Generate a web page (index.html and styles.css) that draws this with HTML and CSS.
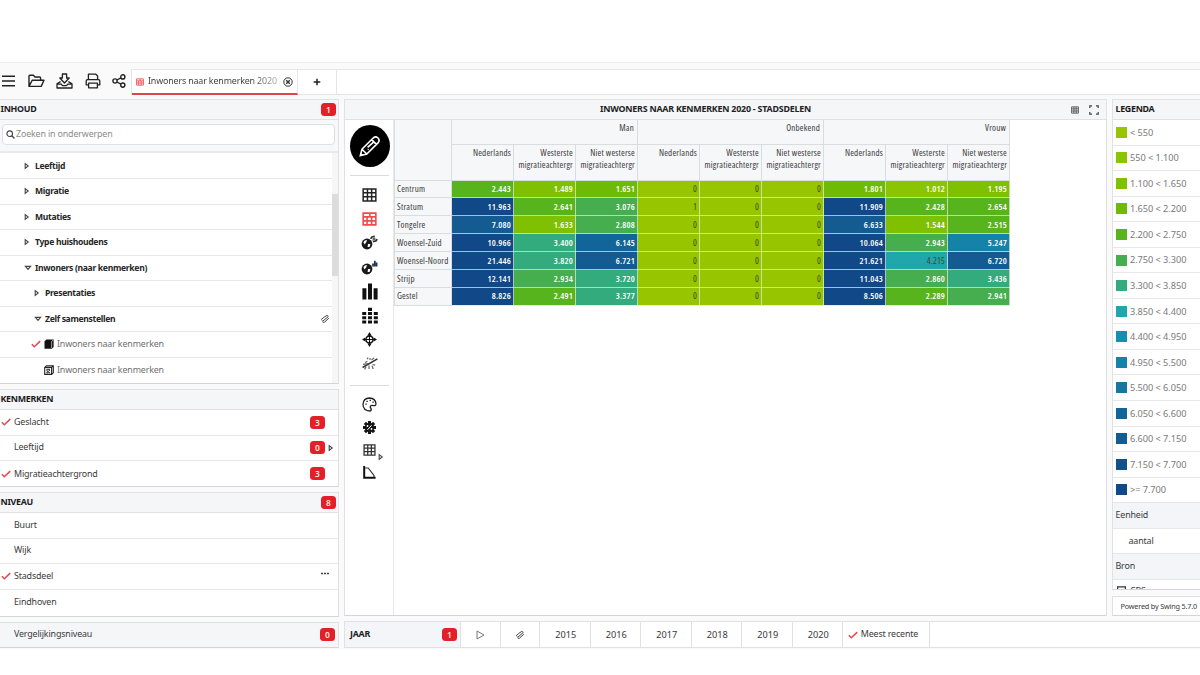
FILE: index.html
```html
<!DOCTYPE html>
<html lang="nl">
<head>
<meta charset="utf-8">
<title>Inwoners naar kenmerken 2020</title>
<link rel="stylesheet" href="styles.css">
</head>
<body>
<svg class="defs" aria-hidden="true">
  <symbol id="check" viewBox="0 0 10 8"><path d="M.8 4.3 3.3 6.7 9.2 1.1" fill="none" stroke="#e8474c" stroke-width="1.5"/></symbol>
  <symbol id="right" viewBox="0 0 6 8"><path d="M1.2 1.6V6.4L4.2 4Z" fill="none" stroke="#444" stroke-width="1.1"/></symbol>
  <symbol id="down" viewBox="0 0 8 6"><path d="M1.4 1.4H6.6L4 4.4Z" fill="none" stroke="#444" stroke-width="1.1"/></symbol>
  <symbol id="multi" viewBox="0 0 10 10"><path d="M1.2 5.6 3.8 3.4 6.8 1.4M1.6 6.2 2.8 7.2 8.2 2.6M2.8 8.2 4.2 8.4 8.8 4.2M6.8 1.4 8.4 2.4" fill="none" stroke="#444" stroke-width="1"/></symbol>
  <symbol id="grid" viewBox="0 0 16 15"><path d="M1.2 1.2H14.8V13.8H1.2ZM1.2 5.2H14.8M1.2 9.5H14.8M5.8 1.2V13.8M10.3 1.2V13.8" fill="none" stroke="currentColor" stroke-width="1.6"/></symbol>
  <symbol id="pivot" viewBox="0 0 16 15"><path d="M1.2 1.2H14.8V13.8H1.2ZM1.2 5.2H14.8M1.2 9.5H14.8M5.4 5.2V13.8M8.4 1.2V5.2M10.3 5.2V13.8" fill="none" stroke="currentColor" stroke-width="1.7"/></symbol>
</svg>
<div class="app">
  <header class="topbar">
    <nav class="tools">
      <svg width="14" height="14" viewBox="0 0 14 14"><path d="M0 2.2H13M0 7H13M0 11.8H13" stroke="#222" stroke-width="1.6"/></svg>
      <svg width="17" height="14" viewBox="0 0 17 14"><path d="M1 12V2.2Q1 1.2 2 1.2H5.4L7 3H11.6Q12.6 3 12.6 4V6M1 12.4 4.2 6.2H16L13.2 12.4Z" fill="none" stroke="#222" stroke-width="1.4" stroke-linejoin="round"/></svg>
      <svg width="17" height="16" viewBox="0 0 17 16"><path d="M6.4 1H10.6V5H13.2L8.5 10 3.8 5H6.4ZM4.6 8.6 1 10.8V15H16V10.8L12.4 8.6M1 11.2H5.2L6.6 12.6H10.4L11.8 11.2H16" fill="none" stroke="#222" stroke-width="1.3" stroke-linejoin="round"/></svg>
      <svg width="16" height="16" viewBox="0 0 16 16"><path d="M3.4 6.5V1.2H10.8L12.6 3V6.5M3.4 11.8H1.2V8Q1.2 6.6 2.6 6.6H13.4Q14.8 6.6 14.8 8V11.8H12.6M3.6 10.2H12.4V14.8H3.6Z" fill="none" stroke="#222" stroke-width="1.3" stroke-linejoin="round"/></svg>
      <svg width="14" height="14" viewBox="0 0 14 14"><g fill="none" stroke="#222" stroke-width="1.4"><circle cx="3" cy="7" r="2.1"/><circle cx="10.8" cy="2.9" r="2.1"/><circle cx="10.8" cy="11.1" r="2.1"/><path d="M4.9 6 8.9 3.9M4.9 8 8.9 10.1"/></g></svg>
    </nav>
    <div class="tabs">
      <div class="tab active"><svg class="red" width="8" height="8"><use href="#pivot"/></svg><span class="tabname">Inwoners naar kenmerken 2020</span>
        <svg class="close" width="10" height="10" viewBox="0 0 10 10"><circle cx="5" cy="5" r="4.2" fill="none" stroke="#333"/><path d="M3.2 3.2 6.8 6.8M6.8 3.2 3.2 6.8" stroke="#333" stroke-width="1.4"/></svg></div>
      <div class="tab plus"><svg width="8" height="8" viewBox="0 0 8 8"><path d="M4 .7V7.3M.7 4H7.3" stroke="#222" stroke-width="1.5"/></svg></div>
    </div>
  </header>

  <main class="work">
    <aside class="left">
      <section class="panel inhoud">
        <h2 class="bar"><span>INHOUD</span><b class="badge">1</b></h2>
        <div class="searchwrap"><div class="search"><svg width="9" height="9" viewBox="0 0 9 9"><circle cx="3.7" cy="3.7" r="2.8" fill="none" stroke="#444" stroke-width="1.1"/><path d="M5.8 5.8 8.5 8.5" stroke="#444" stroke-width="1.3"/></svg><span>Zoeken in onderwerpen</span></div></div>
        <div class="treewrap">
          <div class="tree">
            <div class="row n1"><svg class="ar"><use href="#right"/></svg>Leeftijd</div>
            <div class="row n1"><svg class="ar"><use href="#right"/></svg>Migratie</div>
            <div class="row n1"><svg class="ar"><use href="#right"/></svg>Mutaties</div>
            <div class="row n1"><svg class="ar"><use href="#right"/></svg>Type huishoudens</div>
            <div class="row n1"><svg class="ad"><use href="#down"/></svg>Inwoners (naar kenmerken)</div>
            <div class="row n2"><svg class="ar"><use href="#right"/></svg>Presentaties</div>
            <div class="row n2"><svg class="ad"><use href="#down"/></svg>Zelf samenstellen<svg class="multi"><use href="#multi"/></svg></div>
            <div class="row n3"><svg class="ck"><use href="#check"/></svg><svg class="cube" viewBox="0 0 10 10"><path d="M.5 2.2 2.5.4H9.6V8L7.8 9.7H.5Z" fill="#111"/><path d="M7.6 9V2.4L9.3.9" fill="none" stroke="#fff" stroke-width=".6"/></svg>Inwoners naar kenmerken</div>
            <div class="row n3"><i class="ck"></i><svg class="cube" viewBox="0 0 10 10"><path d="M.7 2.4 2.5.7H9.3V7.8L7.6 9.4H.7ZM.7 2.4H7.6V9.4M7.6 2.4 9.3.7M2.3 4.3H5.3V6M2.6 5.4 5.8 8.2M2.3 7.8H4" fill="none" stroke="#222" stroke-width="1.1"/></svg>Inwoners naar kenmerken</div>
          </div>
          <div class="scroll"><i></i></div>
        </div>
      </section>
      <section class="panel kenm">
        <h2 class="bar"><span>KENMERKEN</span></h2>
        <div class="row item"><svg class="ck"><use href="#check"/></svg><span>Geslacht</span><b class="badge">3</b><i class="ar"></i></div>
        <div class="row item"><i class="ck"></i><span>Leeftijd</span><b class="badge">0</b><svg class="ar"><use href="#right"/></svg></div>
        <div class="row item"><svg class="ck"><use href="#check"/></svg><span>Migratieachtergrond</span><b class="badge">3</b><i class="ar"></i></div>
      </section>
      <section class="panel niv">
        <h2 class="bar"><span>NIVEAU</span><b class="badge">8</b></h2>
        <div class="row item"><i class="ck"></i><span>Buurt</span></div>
        <div class="row item"><i class="ck"></i><span>Wijk</span></div>
        <div class="row item"><svg class="ck"><use href="#check"/></svg><span>Stadsdeel</span><svg class="dots" width="10" height="3" viewBox="0 0 10 3"><path d="M1 1.5H3M4 1.5H6M7 1.5H9" stroke="#444" stroke-width="1.5"/></svg></div>
        <div class="row item"><i class="ck"></i><span>Eindhoven</span></div>
      </section>
      <section class="panel verg"><span>Vergelijkingsniveau</span><b class="badge">0</b></section>
    </aside>

    <div class="right">
      <div class="upper">
        <section class="panel center">
          <h2 class="bar title"><span>INWONERS NAAR KENMERKEN 2020 - STADSDELEN</span>
            <svg class="tg" width="8" height="8"><use href="#grid"/></svg>
            <svg class="fs" width="10" height="10" viewBox="0 0 10 10"><path d="M.8 3V.8H3M7 .8H9.2V3M9.2 7V9.2H7M3 9.2H.8V7" fill="none" stroke="#444" stroke-width="1.2"/></svg></h2>
          <div class="body">
            <div class="palette">
              <div class="pencil"><svg width="22" height="22" viewBox="0 0 22 22"><path d="M1.3 20.7 3 14.2 14.4 2.8Q16.6.8 19 3 21.2 5.4 19.2 7.6L7.8 19ZM3 14.2 7.8 19M12.6 4.6 17.4 9.4M8.6 12.4 14.8 6.8M8.8 14.6 9.5 14M1.8 18.5 3.5 20.2" fill="none" stroke="#fff" stroke-width="1.6"/></svg></div>
              <div class="icons one">
                <svg width="15" height="14" class="dark"><use href="#grid"/></svg>
                <svg width="15" height="14" class="red"><use href="#pivot"/></svg>
                <svg width="17" height="15" viewBox="0 0 17 15"><circle cx="6" cy="9" r="5.4" fill="#1a1a1a"/><path d="M2.4 7.2Q3.4 5 6 5L5.4 7 3.6 9.6ZM7 9H9.4L8.6 12H6.6Z" fill="#fff"/><path d="M10 4Q10 1.5 13 1.6L12.6.6M16 4Q15.5 6.6 12.6 6.2L13 7.2M11.6 4H14.4" fill="none" stroke="#333" stroke-width="1.6"/></svg>
                <svg width="17" height="15" viewBox="0 0 17 15"><circle cx="6" cy="9" r="5.4" fill="#1a1a1a"/><path d="M2.4 7.2Q3.4 5 6 5L5.4 7 3.6 9.6ZM7 9H9.4L8.6 12H6.6Z" fill="#fff"/><path d="M12 6.5V3.5M13.8 6.5V.8M15.6 6.5V2.5" stroke="#26304e" stroke-width="1.7"/></svg>
                <svg width="16" height="17" viewBox="0 0 16 17"><path d="M2.4 16.5V5.2M8 16.5V.5M13.6 16.5V5.2" stroke="#111" stroke-width="4"/></svg>
                <svg width="16" height="17" viewBox="0 0 16 17"><path d="M2.2 16.5V5M8 16.5V.3M13.8 16.5V5" stroke="#111" stroke-width="4" stroke-dasharray="3.1 1.1"/></svg>
                <svg width="15" height="15" viewBox="0 0 15 15"><path d="M7.5 0 9.4 3.2H5.6ZM7.5 15 5.6 11.8H9.4ZM0 7.5 3.2 5.6V9.4ZM15 7.5 11.8 9.4V5.6Z" fill="#111"/><circle cx="7.5" cy="7.5" r="3.6" fill="none" stroke="#111" stroke-width="1.6"/><path d="M7.5 1V14M1 7.5H14" stroke="#111" stroke-width="1.1"/></svg>
                <svg width="16" height="15" viewBox="0 0 16 15"><path d="M.6 11.5 15.4 2.8" stroke="#333" stroke-width="1.5"/><path d="M1 8.4 6 7.6M5 3.2 6.2 1.6M8 4V2M3 6.5 5.4 5.3M10.5 8.5 13.2 9.2M7 9.5V13M10 9.8 11.2 13M4 10.8 2.6 13.4M9.5 4 12 2" stroke="#666" stroke-width="1.2"/></svg>
              </div>
              <div class="icons two">
                <svg width="15" height="15" viewBox="0 0 15 15"><path d="M8 14Q1.2 13.6 1 7.4 1.4 1.2 7.4 1 13.6 1.2 14 6.8 13.8 9 11.4 8.6 8.4 8 8.2 10 9.6 11.8 9 13.4 8.7 14 8 14Z" fill="none" stroke="#222" stroke-width="1.3"/><path d="M3.3 7.2H4.7M4.4 4.3H5.8M7.6 3.3H9M10.4 5.2H11.8" stroke="#222" stroke-width="1.3"/></svg>
                <svg width="13" height="13" viewBox="0 0 13 13"><path d="M6.5 0V13M0 6.5H13M1.9 1.9 11.1 11.1M11.1 1.9 1.9 11.1" stroke="#151515" stroke-width="3.1"/><circle cx="6.5" cy="6.5" r="4.6" fill="#151515"/><path d="M4.5 8.8 8.6 4.2" stroke="#fff" stroke-width="1"/><circle cx="4.5" cy="5" r=".9" fill="#fff"/><circle cx="8.5" cy="8" r=".9" fill="#fff"/></svg>
                <div class="gridmore"><svg width="13" height="12"><use href="#grid"/></svg><svg class="ar sub"><use href="#right"/></svg></div>
                <svg width="13" height="13" viewBox="0 0 13 13"><path d="M1.2 0V11.8H12.6" fill="none" stroke="#111" stroke-width="2"/><path d="M2.2 2H5.2L11 9.4V11" fill="none" stroke="#333" stroke-width="1.2"/></svg>
              </div>
            </div>
            <table class="data">
              <colgroup><col class="first"><col><col><col><col><col><col><col><col><col></colgroup>
              <tr class="h1"><th rowspan="2"></th><th colspan="3">Man</th><th colspan="3">Onbekend</th><th colspan="3">Vrouw</th></tr>
              <tr class="h2"><th>Nederlands</th><th>Westerste<br>migratieachtergr</th><th>Niet westerse<br>migratieachtergr</th><th>Nederlands</th><th>Westerste<br>migratieachtergr</th><th>Niet westerse<br>migratieachtergr</th><th>Nederlands</th><th>Westerste<br>migratieachtergr</th><th>Niet westerse<br>migratieachtergr</th></tr>
              <tr><th>Centrum</th><td class="c4">2.443</td><td class="c2">1.489</td><td class="c3">1.651</td><td class="c0">0</td><td class="c0">0</td><td class="c0">0</td><td class="c3">1.801</td><td class="c1">1.012</td><td class="c2">1.195</td></tr>
              <tr><th>Stratum</th><td class="c14">11.963</td><td class="c4">2.641</td><td class="c5">3.076</td><td class="c0">1</td><td class="c0">0</td><td class="c0">0</td><td class="c14">11.909</td><td class="c4">2.428</td><td class="c4">2.654</td></tr>
              <tr><th>Tongelre</th><td class="c12">7.080</td><td class="c2">1.633</td><td class="c5">2.808</td><td class="c0">0</td><td class="c0">0</td><td class="c0">0</td><td class="c12">6.633</td><td class="c2">1.544</td><td class="c4">2.515</td></tr>
              <tr><th>Woensel-Zuid</th><td class="c14">10.966</td><td class="c6">3.400</td><td class="c11">6.145</td><td class="c0">0</td><td class="c0">0</td><td class="c0">0</td><td class="c14">10.064</td><td class="c5">2.943</td><td class="c9">5.247</td></tr>
              <tr><th>Woensel-Noord</th><td class="c14">21.446</td><td class="c6">3.820</td><td class="c12">6.721</td><td class="c0">0</td><td class="c0">0</td><td class="c0">0</td><td class="c14">21.621</td><td class="c7 ink">4.215</td><td class="c12">6.720</td></tr>
              <tr><th>Strijp</th><td class="c14">12.141</td><td class="c5">2.934</td><td class="c6">3.720</td><td class="c0">0</td><td class="c0">0</td><td class="c0">0</td><td class="c14">11.043</td><td class="c5">2.860</td><td class="c6">3.436</td></tr>
              <tr><th>Gestel</th><td class="c14">8.826</td><td class="c4">2.491</td><td class="c6">3.377</td><td class="c0">0</td><td class="c0">0</td><td class="c0">0</td><td class="c14">8.506</td><td class="c4">2.289</td><td class="c5">2.941</td></tr>
            </table>
          </div>
        </section>
        <aside class="legendcol">
          <section class="panel legend">
            <h2 class="bar"><span>LEGENDA</span></h2>
            <div class="row lg"><i class="c0"></i>&lt; 550</div>
            <div class="row lg"><i class="c1"></i>550 &lt; 1.100</div>
            <div class="row lg"><i class="c2"></i>1.100 &lt; 1.650</div>
            <div class="row lg"><i class="c3"></i>1.650 &lt; 2.200</div>
            <div class="row lg"><i class="c4"></i>2.200 &lt; 2.750</div>
            <div class="row lg"><i class="c5"></i>2.750 &lt; 3.300</div>
            <div class="row lg"><i class="c6"></i>3.300 &lt; 3.850</div>
            <div class="row lg"><i class="c7"></i>3.850 &lt; 4.400</div>
            <div class="row lg"><i class="c8"></i>4.400 &lt; 4.950</div>
            <div class="row lg"><i class="c9"></i>4.950 &lt; 5.500</div>
            <div class="row lg"><i class="c10"></i>5.500 &lt; 6.050</div>
            <div class="row lg"><i class="c11"></i>6.050 &lt; 6.600</div>
            <div class="row lg"><i class="c12"></i>6.600 &lt; 7.150</div>
            <div class="row lg"><i class="c13"></i>7.150 &lt; 7.700</div>
            <div class="row lg"><i class="c14"></i>&gt;= 7.700</div>
            <div class="row sec">Eenheid</div>
            <div class="row val">aantal</div>
            <div class="row sec">Bron</div>
            <div class="row src"><svg width="9" height="9" viewBox="0 0 9 9"><path d="M.6 8V.8H8.4V8Z" fill="none" stroke="#333" stroke-width="1.2"/></svg>CBS</div>
          </section>
          <section class="panel powered">Powered by Swing 5.7.0</section>
        </aside>
      </div>
      <footer class="years">
        <div class="jaar"><span>JAAR</span><b class="badge">1</b></div>
        <div class="ic play"><svg width="9" height="10" viewBox="0 0 9 10"><path d="M1 1V9L8 5Z" fill="none" stroke="#777" stroke-width="1"/></svg></div>
        <div class="ic"><svg class="multi"><use href="#multi"/></svg></div>
        <div class="yr">2015</div><div class="yr">2016</div><div class="yr">2017</div><div class="yr">2018</div><div class="yr">2019</div><div class="yr">2020</div>
        <div class="recent"><svg class="ck"><use href="#check"/></svg>Meest recente</div>
      </footer>
    </div>
  </main>
</div>
</body>
</html>
```

FILE: styles.css
```css
* { box-sizing: border-box; }
body { margin: 0; width: 1200px; height: 675px; padding-top: 62px; overflow: hidden; background: #fff; color: #3a3a3a; font: 8.9px/1.2 "Noto Sans", "Open Sans", sans-serif; letter-spacing: -.15px; }
.defs { position: absolute; width: 0; height: 0; }
svg { flex: none; display: block; }
.app { height: 587px; background: #fafafa; border-top: 1px solid #ededed; display: flex; flex-direction: column; }

.topbar { height: 32px; display: flex; padding-top: 6px; }
.tools { width: 131px; display: flex; align-items: center; gap: 11.5px; padding: 0 0 2px 2px; }
.tabs { flex: 1; display: flex; background: #fff; border: 1px solid #e6e6e6; border-right: 0; height: 26px; }
.tab { display: flex; align-items: center; height: 25px; }
.tab.active { width: 166px; padding-left: 4px; border-right: 1px solid #e6e6e6; border-bottom: 2px solid #d9474a; }
.tabname { width: 132px; margin-left: 4px; white-space: nowrap; background: linear-gradient(90deg, #3a3a3a 78%, #bbb); background-clip: text; -webkit-background-clip: text; color: transparent; }
.close { margin-left: 3px; }
.plus { width: 39px; justify-content: center; border-right: 1px solid #e6e6e6; padding-bottom: 2px; }
.red { color: #f04a4f; }
.dark { color: #222; }

.work { flex: 1; display: flex; gap: 5px; padding-top: 4px; min-height: 0; }
.left { width: 339px; display: flex; flex-direction: column; }
.panel { background: #fff; border: 1px solid #dfe1e4; border-bottom-color: #d2d4da; }
.left .panel { border-left: 0; }
.bar { margin: 0; height: 20px; display: flex; align-items: center; background: #f5f6f8; border-bottom: 1px solid #dfe1e4; font-size: 8.9px; font-weight: 700; color: #1d1d1d; letter-spacing: -.3px; }
.left .bar { padding-left: .5px; }
.badge { width: 15px; height: 13px; margin-left: auto; border-radius: 3.5px; background: #e3202a; color: #ffe9d8; font-size: 8.4px; line-height: 13px; font-weight: 600; text-align: center; letter-spacing: 0; }
.bar .badge { margin-right: 2px; }
.row { height: 25.55px; display: flex; align-items: center; border-bottom: 1px solid #e6e7e9; white-space: nowrap; }
.ar { width: 6px; height: 8px; flex: none; }
.ad { width: 8px; height: 6px; }
.ck { width: 10px; height: 8px; flex: none; }
.multi { width: 10px; height: 10px; }

.inhoud { height: 285px; display: flex; flex-direction: column; }
.inhoud .bar, .searchwrap { flex: none; }
.searchwrap { height: 33px; background: #f7f8fa; padding: 4px 3px 0 2px; border-bottom: 2px solid #e7e9ee; }
.search { height: 21px; display: flex; align-items: center; gap: 1px; border: 1px solid #dcdfe3; border-radius: 4px; background: #fff; color: #8b8b8b; padding-left: 3px; }
.treewrap { flex: 1; display: flex; min-height: 0; }
.tree { flex: 1; overflow: hidden; padding-top: .6px; }
.tree .row { height: 25.5px; }
.scroll { width: 6px; background: #f6f6f6; }
.scroll i { display: block; height: 82px; margin-top: 41px; background: #dcdcdc; }
.n1, .n2 { font-weight: 700; font-size: 8.6px; letter-spacing: -.32px; color: #262626; }
.n1 { padding-left: 24px; }
.n1 .ar, .n2 .ar { margin-right: 5px; }
.n1 .ad, .n2 .ad { margin-right: 3px; }
.n2 { padding-left: 34px; }
.n2 .multi { margin: 0 2px 0 auto; }
.n3 { padding-left: 31px; color: #6f6f6f; }
.tree .row:last-child { border-bottom: 0; }
.cube { width: 10px; height: 10px; margin: 0 3px; }

.kenm { height: 98px; margin-top: 5px; }
.niv { height: 125px; margin-top: 5px; }
.item { padding-left: 1px; }
.item span { margin-left: 3px; }
.kenm .badge { margin-right: 3px; }
.kenm .ar { margin-right: 4px; }
.kenm .row:last-child, .niv .row:last-child { border-bottom: 0; }
.dots { margin: -6px 8px 0 auto; }
.verg { height: 26px; margin-top: 5px; display: flex; align-items: center; background: #f4f6f8; padding: 0 3px 1px 14px; }

.right { flex: 1; display: flex; flex-direction: column; min-width: 0; }
.upper { height: 517px; display: flex; gap: 5px; }
.center { width: 763px; display: flex; flex-direction: column; }
.title { flex: none; padding-left: 255px; color: #222; letter-spacing: -.22px; }
.tg { margin-left: auto; color: #444; }
.fs { margin: 0 7px 0 10px; }
.body { flex: 1; display: flex; align-items: flex-start; min-height: 0; }
.palette { width: 49px; height: 100%; border-right: 1px solid #e6e8ea; padding: 5px 4px 0 5px; }
.pencil { width: 40px; height: 42px; border-radius: 50%; background: #000; display: flex; align-items: center; justify-content: center; }
.icons { display: grid; place-items: center; border-top: 1px solid #dcdcdc; }
.one { margin-top: 8px; height: 210px; padding-top: 6.5px; grid-auto-rows: 24.2px; align-content: start; }
.two { padding-top: 7px; grid-auto-rows: 22.8px; }
.gridmore { display: flex; align-items: flex-end; color: #333; margin-left: 8px; }
.sub { margin: 0 0 -5px 2px; }

.data { border-collapse: collapse; table-layout: fixed; width: 615px; font-family: "Open Sans", "Noto Sans", sans-serif; font-size: 9px; font-stretch: 75%; letter-spacing: .2px; border: 0; }
.data col { width: 62px; }
.data col.first { width: 57px; }
.data th, .data td { border: 1px solid #d9dde0; padding: 0 1px 0 2px; height: 17.93px; font-weight: 400; white-space: nowrap; line-height: 12px; }
.data th { background: #f6f7f9; text-align: left; }
.data .h1 th { height: 24px; text-align: right; vertical-align: top; padding: 2px 3px 0; border-top: 0; }
.data .h2 th { height: 36px; text-align: right; vertical-align: top; padding: 2px 2px 0 0; }
.data td { text-align: right; padding-right: 2px; color: #fff; border-color: rgba(220,232,220,.75); font-weight: 600; }
.data td.c0, .data td.ink { color: #3b4a1c; font-weight: 400; }
.c0 { background: #97c600; } .c1 { background: #8bc400; } .c2 { background: #7fc000; }
.c3 { background: #6fba04; } .c4 { background: #58b41c; } .c5 { background: #46ae4f; }
.c6 { background: #34ab7c; } .c7 { background: #20a7ac; } .c8 { background: #178fb0; }
.c9 { background: #1582a8; } .c10 { background: #14789f; } .c11 { background: #126598; }
.c12 { background: #135b90; } .c13 { background: #12508b; } .c14 { background: #114887; }

.legendcol { width: 88px; display: flex; flex-direction: column; gap: 6px; }
.legendcol .panel { border-right: 0; }
.legend { height: 491px; overflow: hidden; }
.legend .bar { padding-left: 2.5px; }
.lg { padding-left: 3px; gap: 3px; color: #7b7b7b; font-size: 9.2px; letter-spacing: -.05px; }
.lg i { width: 11px; height: 11px; }
.sec { padding-left: 2.5px; background: #f3f5f8; }
.val { padding-left: 15.5px; }
.src { padding-left: 4px; gap: 4px; align-items: flex-start; padding-top: 6px; }
.powered { height: 20px; padding-left: 7.5px; display: flex; align-items: center; font-size: 7.3px; letter-spacing: -.2px; white-space: nowrap; }
.years { height: 27px; margin-top: 5px; display: flex; background: #fff; border: 1px solid #dfe1e4; border-right: 0; }
.years > div { display: flex; align-items: center; justify-content: center; border-right: 1px solid #dfe1e4; }
.years .jaar { width: 116px; background: #f3f5f8; justify-content: space-between; padding: 0 3px 0 5px; font-weight: 700; color: #222; letter-spacing: -.25px; }
.years .ic { width: 39.5px; }
.years .yr { width: 50.5px; padding-left: 2px; font-size: 9.2px; letter-spacing: 0; }
.years .recent { width: 87px; gap: 3px; padding-right: 6px; }
```
